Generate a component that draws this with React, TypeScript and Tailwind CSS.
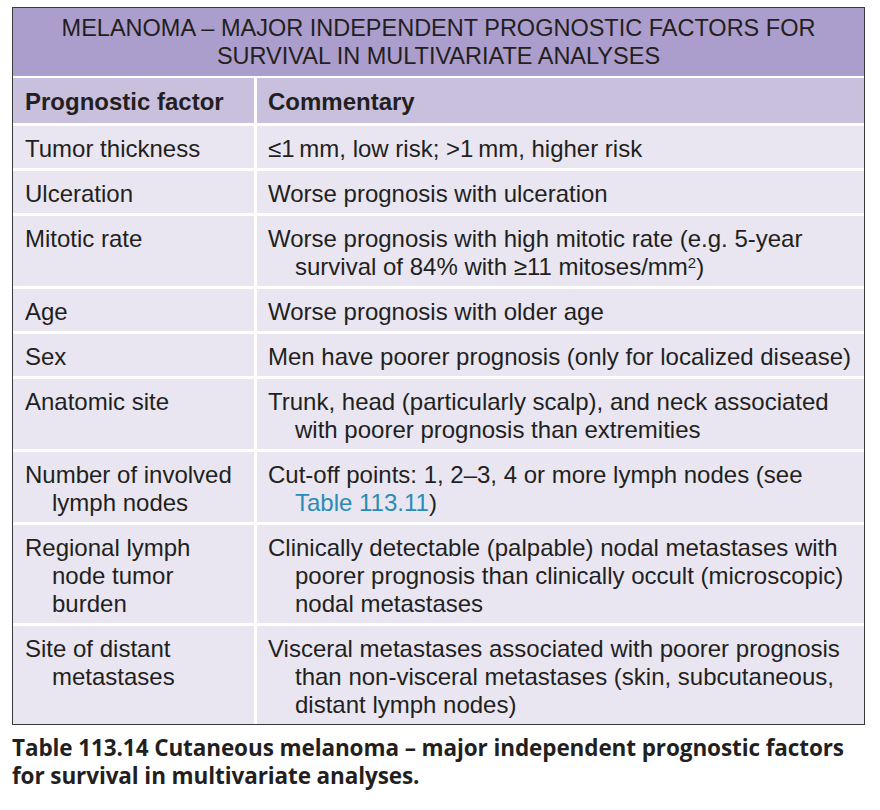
import type { ReactNode } from 'react'

type Row = {
  factor: string[]
  comment: ReactNode[]
}

const ROWS: Row[] = [
  { factor: ['Tumor thickness'], comment: ['≤1\u2009mm, low risk; >1\u2009mm, higher risk'] },
  { factor: ['Ulceration'], comment: ['Worse prognosis with ulceration'] },
  {
    factor: ['Mitotic rate'],
    comment: [
      'Worse prognosis with high mitotic rate (e.g. 5-year',
      <>survival of 84% with ≥11 mitoses/mm<sup className="text-[15px]">2</sup>)</>,
    ],
  },
  { factor: ['Age'], comment: ['Worse prognosis with older age'] },
  { factor: ['Sex'], comment: ['Men have poorer prognosis (only for localized disease)'] },
  {
    factor: ['Anatomic site'],
    comment: [
      'Trunk, head (particularly scalp), and neck associated',
      'with poorer prognosis than extremities',
    ],
  },
  {
    factor: ['Number of involved', 'lymph nodes'],
    comment: [
      'Cut-off points: 1, 2–3, 4 or more lymph nodes (see',
      <><span className="text-[#2a8bb4]">Table 113.11</span>)</>,
    ],
  },
  {
    factor: ['Regional lymph', 'node tumor', 'burden'],
    comment: [
      'Clinically detectable (palpable) nodal metastases with',
      'poorer prognosis than clinically occult (microscopic)',
      'nodal metastases',
    ],
  },
  {
    factor: ['Site of distant', 'metastases'],
    comment: [
      'Visceral metastases associated with poorer prognosis',
      'than non-visceral metastases (skin, subcutaneous,',
      'distant lymph nodes)',
    ],
  },
]

// Hanging indent: first line flush, following lines pushed in
function Lines({ lines }: { lines: ReactNode[] }) {
  return (
    <>
      {lines.map((line, i) => (
        <div key={i} className={`whitespace-nowrap ${i > 0 ? 'pl-[27px]' : ''}`}>
          {line}
        </div>
      ))}
    </>
  )
}

export default function App() {
  return (
    <div className="w-[880px] h-[810px] bg-white pt-[7px] pl-[12px] font-['Liberation_Sans',Arial,sans-serif] text-[#231f20]">
      <div className="w-[853px] border-[1.5px] border-[#3a3a3a] bg-white">
        {/* Title band */}
        <div className="bg-[#ab9dcc] text-center text-[23.5px] leading-[28px] pt-[6px] pb-[6px]">
          <div>MELANOMA – MAJOR INDEPENDENT PROGNOSTIC FACTORS FOR</div>
          <div>SURVIVAL IN MULTIVARIATE ANALYSES</div>
        </div>

        <div className="grid grid-cols-[241px_1fr] gap-x-[3px] gap-y-[3px] bg-white mt-[2px] text-[24px] leading-[28px]">
          {/* Header */}
          <div className="bg-[#c9c0de] font-bold pl-[12px] pt-[10px] pb-[7px]">Prognostic factor</div>
          <div className="bg-[#c9c0de] font-bold pl-[11px] pt-[10px] pb-[7px]">Commentary</div>

          {ROWS.map((row, i) => (
            <div key={i} className="contents">
              <div className="bg-[#e9e6f2] pl-[12px] pt-[9px] pb-[5px]">
                <Lines lines={row.factor} />
              </div>
              <div className="bg-[#e9e6f2] pl-[11px] pt-[9px] pb-[5px]">
                <Lines lines={row.comment} />
              </div>
            </div>
          ))}
        </div>
      </div>

      {/* Caption */}
      <div className="mt-[9px] font-['Open_Sans',sans-serif] font-bold text-[22.5px] leading-[28px] text-[#231f20] tracking-[-0.1px]">
        <div>Table 113.14 Cutaneous melanoma – major independent prognostic factors</div>
        <div>for survival in multivariate analyses.</div>
      </div>
    </div>
  )
}
